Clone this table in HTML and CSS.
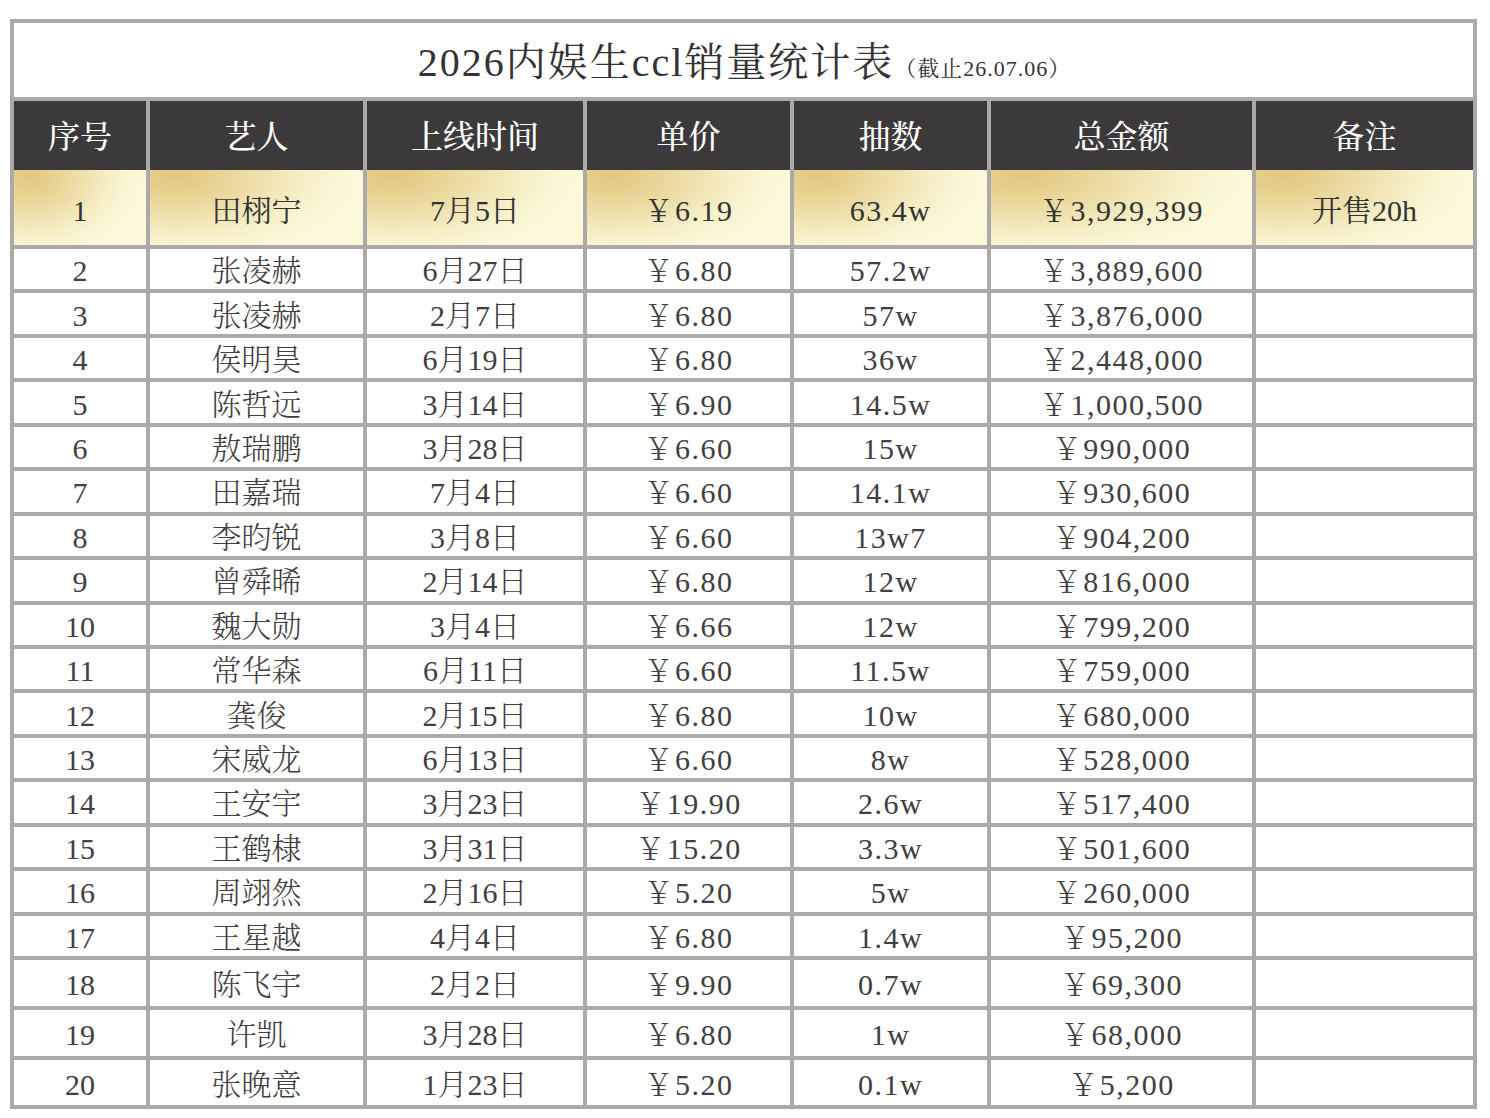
FILE: index.html
```html
<!DOCTYPE html>
<html lang="zh-CN">
<head>
<meta charset="utf-8">
<title>2026内娱生ccl销量统计表</title>
<link rel="stylesheet" href="styles.css">
</head>
<body>
<div class="sheet">
  <div class="title"><span class="main">2026内娱生ccl销量统计表</span><span class="sub">（截止26.07.06）</span></div>
  <div class="row head">
    <div class="c">序号</div><div class="c">艺人</div><div class="c">上线时间</div><div class="c">单价</div><div class="c">抽数</div><div class="c">总金额</div><div class="c">备注</div>
  </div>
  <div class="row gold">
    <div class="c">1</div><div class="c">田栩宁</div><div class="c">7月5日</div><div class="c">￥6.19</div><div class="c">63.4w</div><div class="c">￥3,929,399</div><div class="c">开售20h</div>
  </div>
  <div class="row"><div class="c">2</div><div class="c">张凌赫</div><div class="c">6月27日</div><div class="c">￥6.80</div><div class="c">57.2w</div><div class="c">￥3,889,600</div><div class="c"></div></div>
  <div class="row"><div class="c">3</div><div class="c">张凌赫</div><div class="c">2月7日</div><div class="c">￥6.80</div><div class="c">57w</div><div class="c">￥3,876,000</div><div class="c"></div></div>
  <div class="row"><div class="c">4</div><div class="c">侯明昊</div><div class="c">6月19日</div><div class="c">￥6.80</div><div class="c">36w</div><div class="c">￥2,448,000</div><div class="c"></div></div>
  <div class="row"><div class="c">5</div><div class="c">陈哲远</div><div class="c">3月14日</div><div class="c">￥6.90</div><div class="c">14.5w</div><div class="c">￥1,000,500</div><div class="c"></div></div>
  <div class="row"><div class="c">6</div><div class="c">敖瑞鹏</div><div class="c">3月28日</div><div class="c">￥6.60</div><div class="c">15w</div><div class="c">￥990,000</div><div class="c"></div></div>
  <div class="row"><div class="c">7</div><div class="c">田嘉瑞</div><div class="c">7月4日</div><div class="c">￥6.60</div><div class="c">14.1w</div><div class="c">￥930,600</div><div class="c"></div></div>
  <div class="row"><div class="c">8</div><div class="c">李昀锐</div><div class="c">3月8日</div><div class="c">￥6.60</div><div class="c">13w7</div><div class="c">￥904,200</div><div class="c"></div></div>
  <div class="row"><div class="c">9</div><div class="c">曾舜晞</div><div class="c">2月14日</div><div class="c">￥6.80</div><div class="c">12w</div><div class="c">￥816,000</div><div class="c"></div></div>
  <div class="row"><div class="c">10</div><div class="c">魏大勋</div><div class="c">3月4日</div><div class="c">￥6.66</div><div class="c">12w</div><div class="c">￥799,200</div><div class="c"></div></div>
  <div class="row"><div class="c">11</div><div class="c">常华森</div><div class="c">6月11日</div><div class="c">￥6.60</div><div class="c">11.5w</div><div class="c">￥759,000</div><div class="c"></div></div>
  <div class="row"><div class="c">12</div><div class="c">龚俊</div><div class="c">2月15日</div><div class="c">￥6.80</div><div class="c">10w</div><div class="c">￥680,000</div><div class="c"></div></div>
  <div class="row"><div class="c">13</div><div class="c">宋威龙</div><div class="c">6月13日</div><div class="c">￥6.60</div><div class="c">8w</div><div class="c">￥528,000</div><div class="c"></div></div>
  <div class="row"><div class="c">14</div><div class="c">王安宇</div><div class="c">3月23日</div><div class="c">￥19.90</div><div class="c">2.6w</div><div class="c">￥517,400</div><div class="c"></div></div>
  <div class="row"><div class="c">15</div><div class="c">王鹤棣</div><div class="c">3月31日</div><div class="c">￥15.20</div><div class="c">3.3w</div><div class="c">￥501,600</div><div class="c"></div></div>
  <div class="row"><div class="c">16</div><div class="c">周翊然</div><div class="c">2月16日</div><div class="c">￥5.20</div><div class="c">5w</div><div class="c">￥260,000</div><div class="c"></div></div>
  <div class="row"><div class="c">17</div><div class="c">王星越</div><div class="c">4月4日</div><div class="c">￥6.80</div><div class="c">1.4w</div><div class="c">￥95,200</div><div class="c"></div></div>
  <div class="row tall"><div class="c">18</div><div class="c">陈飞宇</div><div class="c">2月2日</div><div class="c">￥9.90</div><div class="c">0.7w</div><div class="c">￥69,300</div><div class="c"></div></div>
  <div class="row tall"><div class="c">19</div><div class="c">许凯</div><div class="c">3月28日</div><div class="c">￥6.80</div><div class="c">1w</div><div class="c">￥68,000</div><div class="c"></div></div>
  <div class="row tall last"><div class="c">20</div><div class="c">张晚意</div><div class="c">1月23日</div><div class="c">￥5.20</div><div class="c">0.1w</div><div class="c">￥5,200</div><div class="c"></div></div>
</div>
</body>
</html>
```

FILE: styles.css
```css
* { box-sizing: border-box; }

html, body {
  margin: 0;
  padding: 0;
  background: #ffffff;
}

body {
  padding: 19px 0 0 10px;
  font-family: "Liberation Serif", "Noto Serif CJK SC", "Noto Sans CJK SC", serif;
  color: #3a3a3a;
}

.sheet {
  width: 1467px;
  border: 4px solid #aca9a9;
  background: #ffffff;
}

.title {
  height: 78px;
  border-bottom: 4px solid #aca9a9;
  display: flex;
  align-items: baseline;
  justify-content: center;
  padding-top: 16px;
  padding-left: 2px;
  color: #333333;
  white-space: nowrap;
}

.title .main {
  font-size: 40px;
  line-height: 48px;
  letter-spacing: 2px;
}

.title .sub {
  font-size: 22px;
  letter-spacing: 1px;
}

.row {
  display: grid;
  grid-template-columns: 136px 217px 220px 207px 197px 265px 217px;
  height: 44.4375px;
  border-bottom: 4px solid #aca9a9;
}

.row.tall { height: 50px; }
.row.last { height: 45px; border-bottom: none; }

.c {
  display: flex;
  align-items: center;
  justify-content: center;
  padding-top: 4px;
  border-right: 4px solid #aca9a9;
  font-size: 30px;
  line-height: 1;
  font-weight: 300;
  white-space: nowrap;
  color: #404040;
}

.c:nth-child(4),
.c:nth-child(5),
.c:nth-child(6) {
  letter-spacing: 1.5px;
}

.c:last-child { border-right: none; }

.head {
  height: 69px;
  border-bottom: none;
  background: #3b393a;
}

.head .c {
  padding-top: 2px;
  color: #ffffff;
  font-size: 32px;
  font-weight: 500;
  letter-spacing: 0;
}

.gold {
  height: 79px;
}

.gold .c {
  padding-top: 6px;
  background:
    radial-gradient(ellipse 85% 110% at 12% 8%, #e1c67f 0%, #e9d699 30%, #f2e8bb 60%, #f9f5d2 85%, #fbf9da 100%);
  color: #333333;
  font-weight: 400;
}
```
